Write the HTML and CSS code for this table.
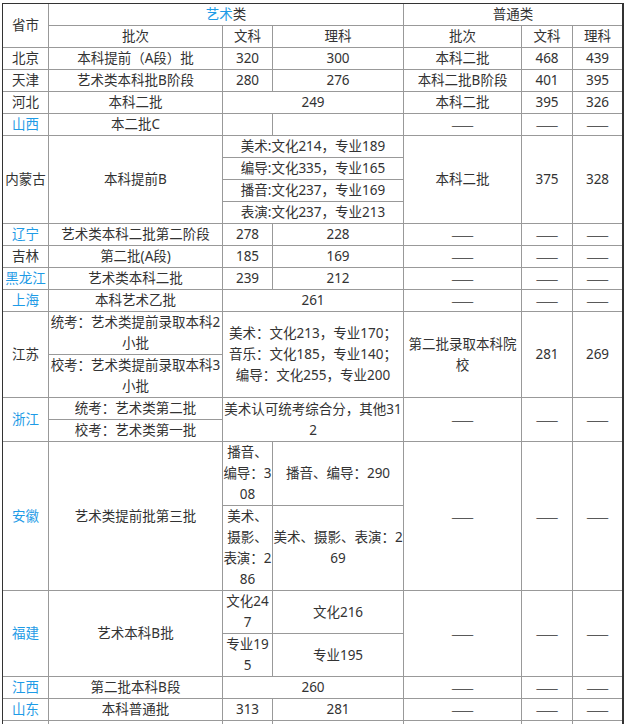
FILE: index.html
```html
<!DOCTYPE html>
<html lang="zh-CN">
<head>
<meta charset="utf-8">
<title>艺术类录取分数线</title>
<link rel="stylesheet" href="styles.css">
</head>
<body>
<table class="tbl">
  <colgroup>
    <col class="c1"><col class="c2"><col class="c3"><col class="c4"><col class="c5"><col class="c6"><col class="c7">
  </colgroup>
  <tbody>
    <tr><td rowspan="2">省市</td><td colspan="3"><span class="blue">艺术</span>类</td><td colspan="3" class="e">普通类</td></tr>
    <tr><td>批次</td><td>文科</td><td>理科</td><td>批次</td><td>文科</td><td class="e">理科</td></tr>

    <tr><td>北京</td><td>本科提前（A段）批</td><td>320</td><td>300</td><td>本科二批</td><td>468</td><td class="e">439</td></tr>
    <tr><td>天津</td><td>艺术类本科批B阶段</td><td>280</td><td>276</td><td>本科二批B阶段</td><td>401</td><td class="e">395</td></tr>
    <tr><td>河北</td><td>本科二批</td><td colspan="2">249</td><td>本科二批</td><td>395</td><td class="e">326</td></tr>
    <tr><td class="blue">山西</td><td>本二批C</td><td></td><td></td><td class="dash">——</td><td class="dash">——</td><td class="dash e">——</td></tr>

    <tr><td rowspan="4">内蒙古</td><td rowspan="4">本科提前B</td><td colspan="2">美术:文化214，专业189</td><td rowspan="4">本科二批</td><td rowspan="4">375</td><td rowspan="4" class="e">328</td></tr>
    <tr><td colspan="2">编导:文化335，专业165</td></tr>
    <tr><td colspan="2">播音:文化237，专业169</td></tr>
    <tr><td colspan="2">表演:文化237，专业213</td></tr>

    <tr><td class="blue">辽宁</td><td>艺术类本科二批第二阶段</td><td>278</td><td>228</td><td class="dash">——</td><td class="dash">——</td><td class="dash e">——</td></tr>
    <tr><td>吉林</td><td>第二批(A段)</td><td>185</td><td>169</td><td class="dash">——</td><td class="dash">——</td><td class="dash e">——</td></tr>
    <tr><td class="blue">黑龙江</td><td>艺术类本科二批</td><td>239</td><td>212</td><td class="dash">——</td><td class="dash">——</td><td class="dash e">——</td></tr>
    <tr><td class="blue">上海</td><td>本科艺术乙批</td><td colspan="2">261</td><td class="dash">——</td><td class="dash">——</td><td class="dash e">——</td></tr>

    <tr><td rowspan="2">江苏</td><td>统考：艺术类提前录取本科2小批</td><td colspan="2" rowspan="2">美术：文化213，专业170；<br>音乐：文化185，专业140；<br>编导：文化255，专业200</td><td rowspan="2">第二批录取本科院校</td><td rowspan="2">281</td><td rowspan="2" class="e">269</td></tr>
    <tr><td>校考：艺术类提前录取本科3小批</td></tr>

    <tr><td rowspan="2" class="blue">浙江</td><td>统考：艺术类第二批</td><td colspan="2" rowspan="2">美术认可统考综合分，其他312</td><td rowspan="2" class="dash">——</td><td rowspan="2" class="dash">——</td><td rowspan="2" class="dash e">——</td></tr>
    <tr><td>校考：艺术类第一批</td></tr>

    <tr><td rowspan="2" class="blue">安徽</td><td rowspan="2">艺术类提前批第三批</td><td>播音、编导：308</td><td>播音、编导：290</td><td rowspan="2" class="dash">——</td><td rowspan="2" class="dash">——</td><td rowspan="2" class="dash e">——</td></tr>
    <tr><td>美术、摄影、表演：286</td><td>美术、摄影、表演：269</td></tr>

    <tr><td rowspan="2" class="blue">福建</td><td rowspan="2">艺术本科B批</td><td>文化247</td><td>文化216</td><td rowspan="2" class="dash">——</td><td rowspan="2" class="dash">——</td><td rowspan="2" class="dash e">——</td></tr>
    <tr><td>专业195</td><td>专业195</td></tr>

    <tr><td class="blue">江西</td><td>第二批本科B段</td><td colspan="2">260</td><td class="dash">——</td><td class="dash">——</td><td class="dash e">——</td></tr>
    <tr><td class="blue">山东</td><td>本科普通批</td><td>313</td><td>281</td><td class="dash">——</td><td class="dash">——</td><td class="dash e">——</td></tr>
    <tr class="tail"><td></td><td></td><td></td><td></td><td></td><td></td><td class="e"></td></tr>
  </tbody>
</table>
</body>
</html>
```

FILE: styles.css
```css
html, body {
  margin: 0;
  padding: 0;
  background: #ffffff;
}

.tbl {
  box-sizing: border-box;
  margin: 3px 0 0 2px;
  width: 622px;
  table-layout: fixed;
  border-collapse: separate;
  border-spacing: 0;
  border-top: 1px solid #333333;
  border-left: 1px solid #333333;
  border-right: 2px solid #333333;
  font-family: "Noto Sans", "Noto Sans CJK SC", sans-serif;
  font-size: 13.5px;
  line-height: 21px;
  color: #333333;
  text-spacing-trim: space-all;
}

.c1 { width: 46px; }
.c2 { width: 174px; }
.c3 { width: 50px; }
.c4 { width: 131px; }
.c5 { width: 118px; }
.c6 { width: 51px; }
.c7 { width: 49px; }

.tbl td {
  box-sizing: border-box;
  padding: 0;
  border-right: 1px solid #999999;
  border-bottom: 1px solid #999999;
  text-align: center;
  vertical-align: middle;
  font-weight: normal;
  word-break: break-all;
}

.tbl td.e {
  border-right: 0;
}

.tail td {
  height: 22px;
}

.blue {
  color: #1e9be6;
}

.dash {
  font-family: "Noto Sans CJK SC", sans-serif;
  color: #333333;
}
```
